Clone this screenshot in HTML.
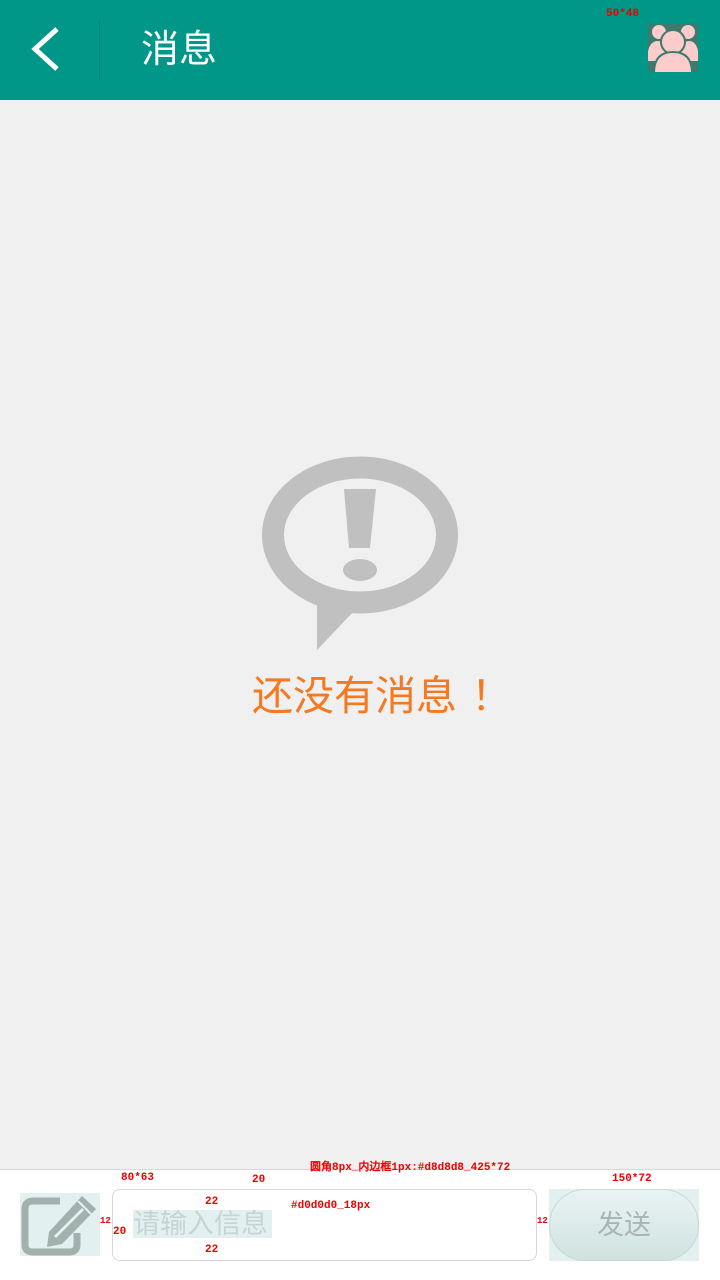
<!DOCTYPE html>
<html><head><meta charset="utf-8"><style>
*{margin:0;padding:0;box-sizing:border-box}
body{width:720px;height:1280px;background:#f0f0f0;position:relative;overflow:hidden;font-family:"Liberation Sans","Noto Sans CJK SC",sans-serif}
.hdr{position:absolute;left:0;top:0;width:720px;height:100px;background:#009688}
.title{position:absolute;left:141px;top:26px;color:#fff;font-size:38px;line-height:48px}
.sep{position:absolute;left:99px;top:20px;width:1px;height:60px;background:#00877a}
.ann{position:absolute;color:#e00;font-size:11px;font-weight:bold;font-family:"Liberation Mono",monospace;white-space:nowrap}
.bar{position:absolute;left:0;top:1169px;width:720px;height:111px;background:#fff;border-top:1px solid #d8d8d8}
</style></head><body>
<div class="hdr">
<svg style="position:absolute;left:28px;top:26px" width="34" height="46"><path d="M29 3 L7 23 L29 43" stroke="#fff" stroke-width="5" fill="none"/></svg>
<div class="sep"></div>
<div class="title">消息</div>
<svg style="position:absolute;left:648px;top:24px" width="50" height="48"><rect width="50" height="48" fill="#3e7a6f"/>
<g fill="#ffcccc" stroke="#3e7a6f" stroke-width="2">
<circle cx="11" cy="8" r="8"/><circle cx="40" cy="8" r="8"/>
<path d="M-2 38 Q-2 16 10 16 Q20 16 20 38Z"/><path d="M30 38 Q30 16 41 16 Q52 16 52 38Z"/>
<circle cx="25" cy="18" r="12"/>
<path d="M6 49 Q6 28 25 28 Q44 28 44 49Z"/></g></svg>
<div class="ann" style="left:606px;top:8px">50*48</div>
</div>
<svg style="position:absolute;left:0;top:0" width="720" height="720">
<ellipse cx="360" cy="535" rx="87" ry="67.5" fill="none" stroke="#c0c0c0" stroke-width="22"/>
<path d="M317 600 L317 650 L354 611Z" fill="#c0c0c0"/>
<path d="M344 489 L376 489 L370 548 L349 548Z" fill="#c0c0c0"/>
<ellipse cx="360" cy="570" rx="17" ry="11" fill="#c0c0c0"/>
</svg>
<div style="position:absolute;left:252px;top:666px;color:#f47920;font-size:41px;line-height:52px;font-family:'Noto Sans CJK SC',sans-serif;white-space:nowrap">还没有消息<span style="margin-left:14px">！</span></div>
<div class="bar"></div>
<svg style="position:absolute;left:20px;top:1193px" width="80" height="63"><rect width="80" height="63" fill="#e2f1f0"/>
<path d="M40 8 H13 Q5 8 5 16 V52 Q5 59 13 59 H49 Q57 59 57 52 V40" fill="none" stroke="#a3b1ae" stroke-width="7"/>
<path d="M62 3 L76 16 L42 51 L27 54 L29 39Z" fill="#a3b1ae"/><path d="M35 44 L63 16" stroke="#e2f1f0" stroke-width="3"/><path d="M58 8 L71 21" stroke="#e2f1f0" stroke-width="2"/></svg>
<div style="position:absolute;left:112px;top:1189px;width:425px;height:72px;border:1px solid #d8d8d8;border-radius:8px;background:#fff"></div>
<div style="position:absolute;left:133px;top:1210px;background:#e2f1f0;color:#c8d4d3;font-size:27px;line-height:28px;width:139px;white-space:nowrap;overflow:hidden">请输入信息</div>
<div style="position:absolute;left:549px;top:1189px;width:150px;height:72px;background:#e2f1f0"><div style="width:150px;height:72px;border-radius:36px;border:1px solid #c8d8d6;background:linear-gradient(#e9f4f3,#d0e2e0);color:#a8b5b3;font-size:27px;line-height:70px;text-align:center">发送</div></div>
<div class="ann" style="left:310px;top:1158px">圆角8px_内边框1px:#d8d8d8_425*72</div>
<div class="ann" style="left:121px;top:1172px">80*63</div>
<div class="ann" style="left:612px;top:1173px">150*72</div>
<div class="ann" style="left:252px;top:1174px">20</div>
<div class="ann" style="left:205px;top:1196px">22</div>
<div class="ann" style="left:205px;top:1244px">22</div>
<div class="ann" style="left:113px;top:1226px">20</div>
<div class="ann" style="left:291px;top:1200px">#d0d0d0_18px</div>
<div class="ann" style="left:100px;top:1216px;font-size:9px">12</div>
<div class="ann" style="left:537px;top:1216px;font-size:9px">12</div>
</body></html>
